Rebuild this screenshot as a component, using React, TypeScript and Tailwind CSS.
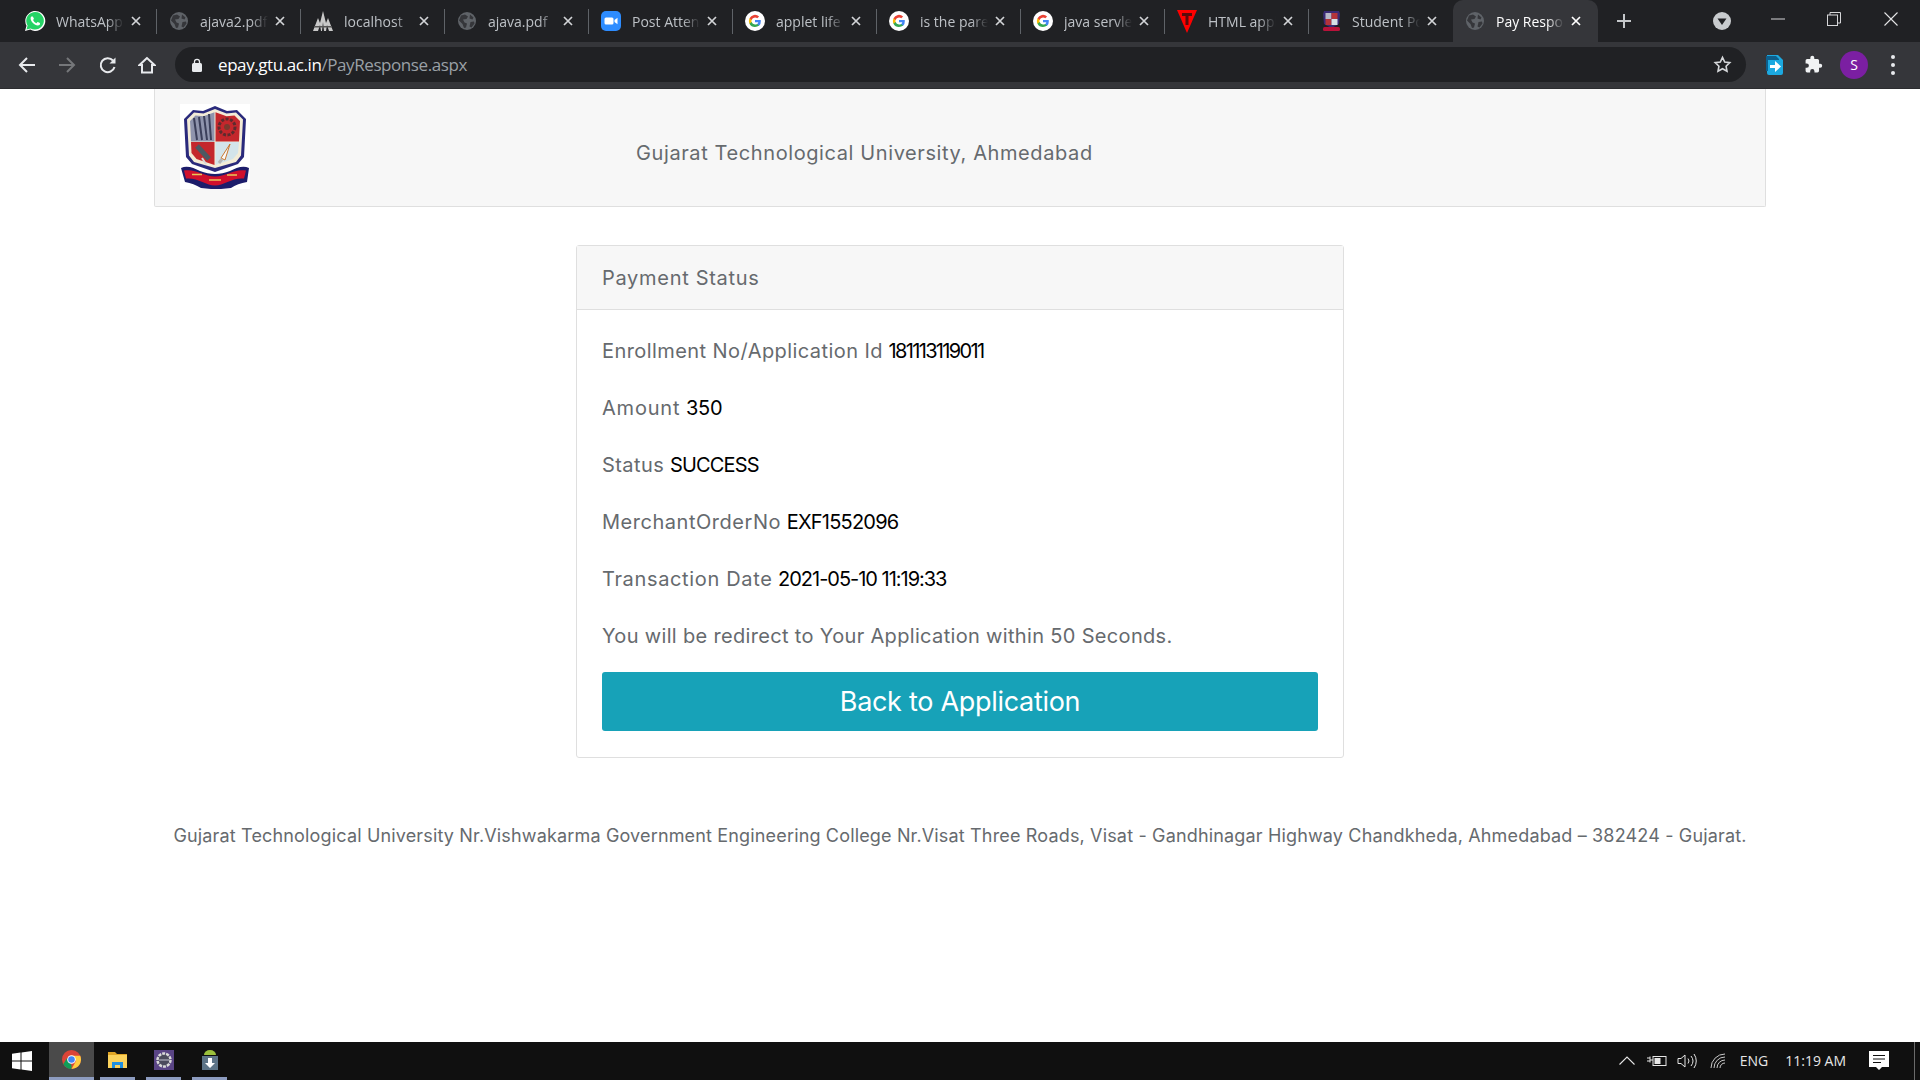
import React from "react";

const ui = "font-['Open_Sans','Noto_Sans',sans-serif]";
const page = "font-['Inter','Noto_Sans',sans-serif]";

const Globe = () => (
  <svg width="20" height="20" viewBox="0 0 20 20">
    <circle cx="10" cy="10" r="9" fill="#5f6368" />
    <path d="M4 4.500 8 3.500 11 5.500 9.500 8 6 8.500 7.500 11.500 10 12.500 9 16.500 7 17 5.500 13 2 9.500ZM13 3.500l3.500 3-1 2-3-1ZM13.500 11l3.500-.5.5 2-3 4-2-1Z" fill="#35363a" />
  </svg>
);

const GoogleG = () => (
  <svg width="20" height="20" viewBox="0 0 20 20">
    <circle cx="10" cy="10" r="10" fill="#fff" />
    <path d="M15.800 10.200c0-.5 0-.9-.1-1.300H10v2.400h3.300a2.900 2.900 0 0 1-1.200 1.900v1.600h2a6 6 0 0 0 1.700-4.600Z" fill="#4285f4" />
    <path d="M10 16c1.600 0 3-.5 4.100-1.400l-2-1.600c-.6.4-1.300.6-2.100.6a3.600 3.600 0 0 1-3.400-2.500H4.500v1.600A6 6 0 0 0 10 16Z" fill="#34a853" />
    <path d="M6.600 11.100a3.600 3.600 0 0 1 0-2.200V7.300H4.500a6 6 0 0 0 0 5.400Z" fill="#fbbc05" />
    <path d="M10 6.400c.9 0 1.700.3 2.300.9l1.800-1.800A6 6 0 0 0 4.500 7.300l2.100 1.600A3.600 3.600 0 0 1 10 6.400Z" fill="#ea4335" />
  </svg>
);

const WhatsApp = () => (
  <svg width="22" height="22" viewBox="0 0 22 22">
    <path d="M1 21l1.500-5.300A10 10 0 1 1 6.300 19.600Z" fill="#fff" />
    <path d="M2.500 19.500l1.100-4A8.800 8.800 0 1 1 6.600 18.400Z" fill="#25d366" />
    <path d="M8 6.200c-.5 0-1.400.8-1.400 2.300 0 2.700 3.900 7 7.200 7 1.400 0 2.300-1 2.300-2 0-.4-2.200-1.500-2.500-1.400-.4.1-.8 1.100-1.200 1.100-.9 0-3.200-2.200-3.300-3.100 0-.4.800-.8.800-1.300 0-.4-.8-2.600-1.900-2.600Z" fill="#fff" />
  </svg>
);

const Peaks = () => (
  <svg width="20" height="22" viewBox="0 0 20 22">
    <path d="M0 21 5 8l2 5 3-12 3 12 2-5 5 13h-4l-2-6-1 6h-2l-1-9-1 9H8l-1-6-2 6Z" fill="#c8c8c8" />
    <rect x="1" y="16" width="18" height="1.500" fill="#555" />
  </svg>
);

const Zoom = () => (
  <svg width="20" height="20" viewBox="0 0 20 20">
    <rect width="20" height="20" rx="5" fill="#2d8cff" />
    <rect x="3.500" y="6.500" width="9" height="7" rx="1.500" fill="#fff" />
    <path d="M13.500 9l3-2.200v6.400l-3-2.200Z" fill="#fff" />
  </svg>
);

const RedT = () => (
  <svg width="20" height="24" viewBox="0 0 20 24">
    <path d="M0 1h20L10 24Z" fill="#ff0000" />
    <path d="M5 4h10v3h-3.500v9h-3V7H5Z" fill="#5a0b0b" />
  </svg>
);

const MiniShield = () => (
  <svg width="19" height="24" viewBox="0 0 19 24">
    <path d="M2 2h15l1 3-1 10-7.500 4L2 15 1 5Z" fill="#3a2a74" />
    <rect x="3.500" y="4" width="6" height="6" fill="#b7b7c7" />
    <rect x="9.500" y="4" width="6" height="6" fill="#b5333a" />
    <rect x="3.500" y="10" width="6" height="6" fill="#b5333a" />
    <rect x="9.500" y="10" width="6" height="6" fill="#d6e0e6" />
    <rect x="1" y="18" width="17" height="4" rx="1.500" fill="#b9123a" />
  </svg>
);

const Close = ({ color = "#d2d4d7" }: { color?: string }) => (
  <svg width="10" height="10" viewBox="0 0 10 10" className="shrink-0">
    <path d="M1 1l8 8M9 1l-8 8" stroke={color} strokeWidth="1.700" />
  </svg>
);

const tabs: { icon: React.ReactNode; title: string }[] = [
  { icon: <WhatsApp />, title: "WhatsApp" },
  { icon: <Globe />, title: "ajava2.pdf" },
  { icon: <Peaks />, title: "localhost" },
  { icon: <Globe />, title: "ajava.pdf" },
  { icon: <Zoom />, title: "Post Attendee" },
  { icon: <GoogleG />, title: "applet life cycle" },
  { icon: <GoogleG />, title: "is the parent" },
  { icon: <GoogleG />, title: "java servlet" },
  { icon: <RedT />, title: "HTML applet" },
  { icon: <MiniShield />, title: "Student Portal" },
];

function Tab({ icon, title, last }: { icon: React.ReactNode; title: string; last: boolean }) {
  return (
    <div className="w-[144px] h-[42px] shrink-0 flex items-center relative">
      <div className="w-[43px] shrink-0 flex justify-center pl-[1px]">{icon}</div>
      <div className="w-[68px] shrink-0 overflow-hidden whitespace-nowrap text-[14px] text-[#bdc1c6] [mask-image:linear-gradient(to_right,black_75%,transparent_100%)]">
        {title}
      </div>
      <div className="w-[24px] flex justify-center">
        <Close />
      </div>
      {!last && <div className="absolute right-0 top-[9px] h-[25px] w-px bg-[#5f6368]" />}
    </div>
  );
}

function TabStrip() {
  return (
    <div className="h-[42px] bg-[#202124] flex items-start pl-[13px] text-white">
      {tabs.map((t, i) => (
        <Tab key={i} icon={t.icon} title={t.title} last={i === tabs.length - 1} />
      ))}
      <div className="w-[145px] h-[42px] shrink-0 bg-[#35363a] rounded-t-[10px] flex items-center">
        <div className="w-[43px] shrink-0 flex justify-center pl-[1px]"><Globe /></div>
        <div className="w-[68px] shrink-0 overflow-hidden whitespace-nowrap text-[14px] text-white [mask-image:linear-gradient(to_right,black_75%,transparent_100%)]">
          Pay Response
        </div>
        <div className="w-[24px] flex justify-center"><Close color="#ffffff" /></div>
      </div>
      <div className="ml-[18px] h-[42px] flex items-center">
        <svg width="16" height="16" viewBox="0 0 16 16"><path d="M8 1v14M1 8h14" stroke="#c4c7ca" strokeWidth="2" /></svg>
      </div>
      <div className="ml-[81px] h-[42px] flex items-center">
        <svg width="18" height="18" viewBox="0 0 18 18">
          <circle cx="9" cy="9" r="9" fill="#c8cbce" />
          <path d="M4.500 6.500h9L9 13Z" fill="#202124" />
        </svg>
      </div>
      <div className="ml-[40px] h-[38px] flex items-center">
        <svg width="14" height="14" viewBox="0 0 14 14"><path d="M0 7h14" stroke="#d5d6d8" strokeWidth="1" /></svg>
      </div>
      <div className="ml-[42px] h-[38px] flex items-center">
        <svg width="14" height="14" viewBox="0 0 14 14" fill="none" stroke="#d5d6d8"><rect x=".5" y="3" width="10" height="10.500" /><path d="M3 3V.5h10.500V11H10.500" /></svg>
      </div>
      <div className="ml-[43px] h-[38px] flex items-center">
        <svg width="14" height="14" viewBox="0 0 14 14"><path d="M.5.500l13 13M13.500.5l-13 13" stroke="#e4e5e6" strokeWidth="1.100" /></svg>
      </div>
    </div>
  );
}

function Toolbar() {
  return (
    <div className="h-[47px] bg-[#35363a] flex items-start pl-[18px] pt-[5px] border-b border-[#2c2d30]">
      <div className="h-[35px] flex items-center w-[40px]">
        <svg width="18" height="18" viewBox="0 0 18 18" fill="none" stroke="#e8eaed" strokeWidth="2"><path d="M17 9H2M9 2 2 9l7 7" /></svg>
      </div>
      <div className="h-[35px] flex items-center w-[41px]">
        <svg width="18" height="18" viewBox="0 0 18 18" fill="none" stroke="#75777a" strokeWidth="2"><path d="M1 9h15M9 2l7 7-7 7" /></svg>
      </div>
      <div className="h-[35px] flex items-center w-[39px]">
        <svg width="18" height="18" viewBox="0 0 18 18" fill="none" stroke="#e8eaed" strokeWidth="2"><path d="M15.500 11A7 7 0 1 1 14 4.500" /><path d="M16.500 1.500v6h-6Z" fill="#e8eaed" stroke="none" /></svg>
      </div>
      <div className="h-[35px] flex items-center w-[37px]">
        <svg width="18" height="18" viewBox="0 0 18 18" fill="none" stroke="#e8eaed" strokeWidth="2"><path d="M9 2 1.500 9H4v7.500h10V9h2.500Z" /></svg>
      </div>
      <div className="w-[1571px] h-[35px] shrink-0 bg-[#202124] rounded-full flex items-center pl-[16px] pr-[14px]">
        <svg width="12" height="14" viewBox="0 0 12 14">
          <rect x="1" y="5" width="10" height="9" rx="1.500" fill="#e8eaed" />
          <path d="M3.500 6V3.800a2.500 2.500 0 0 1 5 0V6" fill="none" stroke="#e8eaed" strokeWidth="1.300" />
        </svg>
        <div className={`ml-[15px] text-[17px] tracking-[-0.42px] ${ui}`}>
          <span className="text-white">epay.gtu.ac.in</span>
          <span className="text-[#9aa0a6]">/PayResponse.aspx</span>
        </div>
        <svg className="ml-auto" width="19" height="19" viewBox="0 0 24 24" fill="none" stroke="#d5d7da" strokeWidth="2"><path d="m12 3 2.800 5.900 6.400.8-4.700 4.400 1.200 6.400L12 17.400l-5.700 3.100 1.200-6.400-4.700-4.400 6.400-.8Z" /></svg>
      </div>
      <div className="h-[35px] flex items-center ml-[20px]">
        <svg width="18" height="20" viewBox="0 0 18 20">
          <path d="M1 0h11l5 5v13a2 2 0 0 1-2 2H3a2 2 0 0 1-2-2Z" fill="#1ca9e0" />
          <path d="M0 1h10l3 3v1H2v11H0Z" fill="#0d5f8c" />
          <path d="M4 10h5V6l6 5.500-6 5.500v-4H4Z" fill="#fff" />
        </svg>
      </div>
      <div className="h-[35px] flex items-center ml-[20px]">
        <svg width="19" height="19" viewBox="0 0 24 24" fill="#f1f3f4"><path d="M20.500 11H19V7a2 2 0 0 0-2-2h-4V3.500a2.500 2.500 0 0 0-5 0V5H4a2 2 0 0 0-2 2v3.800h1.500a2.700 2.700 0 0 1 0 5.400H2V20a2 2 0 0 0 2 2h3.800v-1.500a2.700 2.700 0 0 1 5.400 0V22H17a2 2 0 0 0 2-2v-4h1.500a2.500 2.500 0 0 0 0-5Z" /></svg>
      </div>
      <div className="h-[35px] flex items-center ml-[17px]">
        <div className={`w-[28px] h-[28px] rounded-full bg-[#7b1fa2] flex items-center justify-center text-white text-[14px] ${ui}`}>S</div>
      </div>
      <div className="h-[35px] flex items-center ml-[23px]">
        <div className="flex flex-col gap-[4px]">
          <div className="w-[4px] h-[4px] rounded-full bg-[#e8eaed]" />
          <div className="w-[4px] h-[4px] rounded-full bg-[#e8eaed]" />
          <div className="w-[4px] h-[4px] rounded-full bg-[#e8eaed]" />
        </div>
      </div>
    </div>
  );
}

const Logo = () => (
  <div className="w-[70px] h-[85px] bg-white shrink-0 flex items-center justify-center">
    <svg width="70" height="85" viewBox="0 0 70 85" className="blur-[0.5px]">
      <path d="M4 15 13 6l10 1 12-5 12 5 10-1 9 9-2 38-6 7-23 8-23-8-6-7Z" fill="#2a2a7c" />
      <path d="M7 15.500 14 8.500l9.500 1L35 5l11.500 4.500L56 8.500l7 7-2 36-5 6.500L35 64 14 58l-5-6.500Z" fill="#f3ecd7" />
      <path d="M10 17l5.500-5.500 8 .8 11-4v29.200H11Z" fill="#8f94ad" />
      <path d="M14 14l3 22M19 13l3 23M24 12l3 24M29 10l2 26" stroke="#3b3f5a" strokeWidth="2" />
      <path d="M35.500 8.300l11 4 8-.8 5.500 5.500-1 20.500H35.500Z" fill="#c4272c" />
      <circle cx="47" cy="23" r="8" fill="none" stroke="#5d2b2e" strokeWidth="3" strokeDasharray="3 1.500" />
      <circle cx="47" cy="23" r="3" fill="#7b3a2e" />
      <path d="M11 38h23.500v23l-18-6-5-6Z" fill="#c4272c" />
      <path d="M17 42l12 13" stroke="#4d5962" strokeWidth="5" />
      <path d="M22 54l4 6" stroke="#d8d8d8" strokeWidth="2" />
      <path d="M35.500 38H59l-1 11-5 6-17.500 6Z" fill="#d3e4ea" />
      <path d="M50 40l-9 14 4 2Z" fill="#f8f8f8" stroke="#c9772e" />
      <path d="M42 55l-3 4" stroke="#b7b7b7" strokeWidth="3" />
      <path d="M1 64c6-3 13 0 19 3 10 4 20 4 30 0 6-3 13-6 19-3l-2 14c-6 1-12 3-16 6-10 1.500-20 1.500-30 0-5-3-10-5-16-6Z" fill="#1d1d6b" />
      <path d="M4 66.500c12-2 20 6 31 6s19-8 31-6l-2 8c-12-1-20 7-29 7S18 73.500 6 74.500Z" fill="#d0102c" />
      <path d="M12 70.500h10M29 76h12M47 71h10" stroke="#e8c75a" strokeWidth="1.500" />
    </svg>
  </div>
);

const rows = [
  { label: "Enrollment No/Application Id", value: "181113119011", lt: "tracking-[0.43px]", vt: "tracking-[-1.67px]" },
  { label: "Amount", value: "350", lt: "tracking-[0.8px]", vt: "tracking-[-0.2px]" },
  { label: "Status", value: "SUCCESS", lt: "tracking-[0.45px]", vt: "tracking-[-0.85px]" },
  { label: "MerchantOrderNo", value: "EXF1552096", lt: "tracking-[0.53px]", vt: "tracking-[-0.78px]" },
  { label: "Transaction Date", value: "2021-05-10 11:19:33", lt: "tracking-[0.65px]", vt: "tracking-[-1.02px]" },
];

function Content() {
  return (
    <div className={`flex-1 bg-white ${page} text-[#666a6e]`}>
      <div className="w-[1612px] h-[118px] mx-auto bg-[#f7f7f7] border border-[#dfdfdf] border-t-0 rounded-b-[2px] flex items-start pl-[25px] pt-[15px]">
        <Logo />
        <div className="ml-[386px] mt-[34px] text-[20px] leading-[30px] tracking-[0.6px]">Gujarat Technological University, Ahmedabad</div>
      </div>
      <div className="w-[768px] h-[513px] mx-auto mt-[38px] border border-[#dfdfdf] rounded-[3px]">
        <div className="h-[64px] bg-[#f7f7f7] border-b border-[#dfdfdf] pl-[25px] flex items-center text-[20px] tracking-[0.7px]">Payment Status</div>
        <div className="px-[25px] pt-[24px]">
          {rows.map((r) => (
            <div key={r.label} className="h-[57px] text-[20px] leading-[34px]">
              <span className={r.lt}>{r.label}</span> <span className={`text-black ${r.vt}`}>{r.value}</span>
            </div>
          ))}
          <div className="h-[48px] text-[20px] leading-[34px] tracking-[0.33px]">You will be redirect to Your Application within 50 Seconds.</div>
          <div className="h-[59px] mt-[5px] pt-[2px] rounded-[3px] bg-[#17a2b8] text-white text-[27px] tracking-[-0.3px] flex items-center justify-center">Back to Application</div>
        </div>
      </div>
      <div className="mt-[63px] text-center text-[18px] leading-[30px] tracking-[0.16px]">
        Gujarat Technological University Nr.Vishwakarma Government Engineering College Nr.Visat Three Roads, Visat - Gandhinagar Highway Chandkheda, Ahmedabad – 382424 - Gujarat.
      </div>
    </div>
  );
}

function Taskbar() {
  return (
    <div className={`h-[38px] bg-[#101010] flex items-stretch shrink-0 text-[#e6e6e6] ${ui}`}>
      <div className="w-[49px] flex items-center pl-[12px]">
        <svg width="20" height="20" viewBox="0 0 20 20" fill="#fff"><path d="M0 2.800 8.500 1.600v7.800H0ZM9.500 1.500 20 0v9.400H9.500ZM0 10.500h8.500v7.900L0 17.200ZM9.500 10.500H20V20L9.500 18.500Z" /></svg>
      </div>
      <div className="w-[45px] bg-[#4a4a4a] border-b-[3px] border-[#8d9cc0] flex items-center justify-center">
        <svg width="19" height="19" viewBox="0 0 19 19">
          <circle cx="9.500" cy="9.500" r="9.500" fill="#db4437" />
          <path d="M9.500 19A9.500 9.500 0 0 1 1.300 14.300L5 8l4.500 7Z" fill="#0f9d58" />
          <path d="M18.200 5.700A9.500 9.500 0 0 1 9.500 19L14 11 9.500 5.700Z" fill="#ffcd40" />
          <circle cx="9.500" cy="9.500" r="4.300" fill="#fff" />
          <circle cx="9.500" cy="9.500" r="3.300" fill="#4285f4" />
        </svg>
      </div>
      <div className="w-[35px] ml-[6px] border-b-[3px] border-[#8d9cc0] flex items-center justify-center">
        <svg width="19" height="17" viewBox="0 0 19 17">
          <path d="M0 1h7l2 2h10v14H0Z" fill="#e0a526" />
          <rect y="4" width="19" height="13" fill="#fbd25c" />
          <path d="M4 17v-6h11v6h-3v-3H7v3Z" fill="#1f8fe0" />
        </svg>
      </div>
      <div className="w-[35px] ml-[11px] border-b-[3px] border-[#8d9cc0] flex items-center justify-center">
        <svg width="20" height="20" viewBox="0 0 20 20">
          <rect width="20" height="20" fill="#5a4585" />
          <circle cx="10" cy="10" r="6.500" fill="#4b4b5c" stroke="#d9d9d9" strokeWidth="2.500" strokeDasharray="3 1" />
          <path d="M5 10h10" stroke="#9a9aa8" strokeWidth="1.500" />
        </svg>
      </div>
      <div className="w-[35px] ml-[11px] border-b-[3px] border-[#8d9cc0] flex items-center justify-center">
        <svg width="16" height="21" viewBox="0 0 16 21">
          <path d="M2 6a6 5 0 0 1 12 0Z" fill="#9bc13c" />
          <rect y="7" width="16" height="14" fill="#5d7487" />
          <path d="M6 9h4v5h3l-5 5-5-5h3Z" fill="#fff" />
        </svg>
      </div>
      <div className="flex-1" />
      <div className="flex items-center pb-[1px]">
        <svg width="16" height="9" viewBox="0 0 16 9" fill="none" stroke="#e6e6e6" strokeWidth="1.100"><path d="M.5 8.500 8 1l7.500 7.500" /></svg>
        <svg className="ml-[12px]" width="20" height="12" viewBox="0 0 20 12" fill="none" stroke="#e6e6e6">
          <path d="M0 3h3M0 6h3M3 1.500v6M3 5h3" />
          <rect x="6" y="1.500" width="13" height="9" />
          <rect x="7.500" y="3" width="6" height="6" fill="#e6e6e6" stroke="none" />
        </svg>
        <svg className="ml-[10px]" width="20" height="16" viewBox="0 0 20 16" fill="none" stroke="#e6e6e6">
          <path d="M1 5.500h3L8 2v12l-4-3.500H1Z" />
          <path d="M11 5.500a4 4 0 0 1 0 5M14 3a8 8 0 0 1 0 10M17 1a12 12 0 0 1 0 14" />
        </svg>
        <svg className="ml-[13px]" width="16" height="16" viewBox="0 0 16 16" fill="none" stroke="#c9c9c9">
          <path d="M1 15A14 14 0 0 1 15 1M4 15A11 11 0 0 1 15 4M7 15A8 8 0 0 1 15 7M10 15a5 5 0 0 1 5-5" />
        </svg>
        <div className="ml-[14px] text-[14px]">ENG</div>
        <div className="ml-[17px] text-[14px]">11:19 AM</div>
      </div>
      <div className="flex items-center ml-[23px] mr-[25px]">
        <svg width="20" height="20" viewBox="0 0 20 20">
          <path d="M0 0h20v16h-7l-3 3-3-3H0Z" fill="#fff" />
          <path d="M4 4.500h12M4 8h12M4 11.500h8" stroke="#101010" />
        </svg>
      </div>
      <div className="w-px bg-[#6a6a6a] mr-[5px]" />
    </div>
  );
}

export default function App() {
  return (
    <div className={`w-[1920px] h-[1080px] overflow-hidden flex flex-col bg-white ${ui}`}>
      <TabStrip />
      <Toolbar />
      <Content />
      <Taskbar />
    </div>
  );
}
